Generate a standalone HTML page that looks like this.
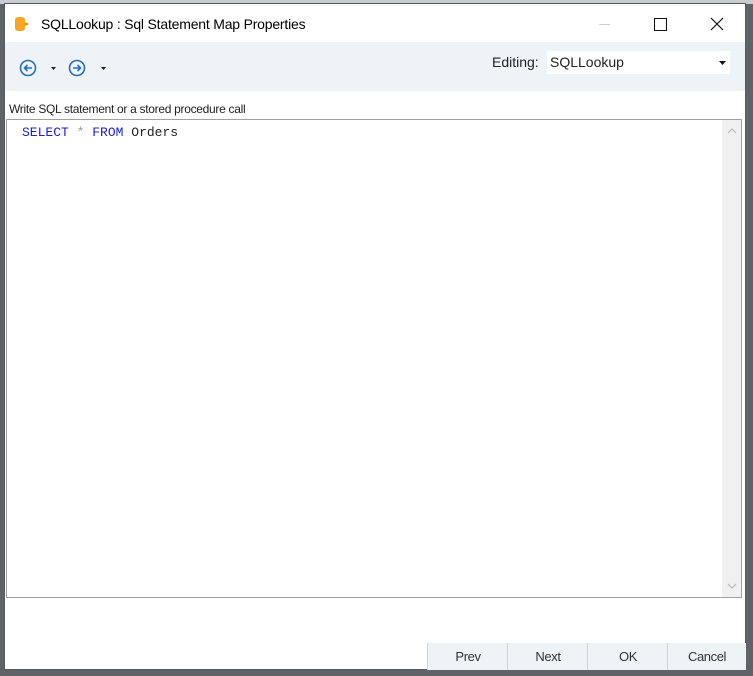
<!DOCTYPE html>
<html><head><meta charset="utf-8"><style>
html,body{margin:0;padding:0;width:753px;height:676px;overflow:hidden;background:#5f6368;position:relative;font-family:"Liberation Sans",sans-serif}
.top{position:absolute;left:0;top:0;width:753px;height:4px;background:#c8ccd0}
.win{position:absolute;left:4px;top:3px;width:742px;height:667px;background:#fff;border:1px solid #555b61;box-sizing:border-box}
.title{position:absolute;left:0;top:0;width:100%;height:39px;background:#fff}
.title .t{position:absolute;left:36px;top:12px;font-size:14px;color:#000;letter-spacing:-0.2px}
.tb{position:absolute;left:0;top:38px;width:100%;height:49px;background:#eef3f8}
.lbl{position:absolute;left:4px;top:98px;font-size:12px;color:#222;letter-spacing:-0.3px}
.ed{position:absolute;left:1px;top:115px;width:736px;height:479px;border:1px solid #a0a0a0;box-sizing:border-box;background:#fff}
.sb{position:absolute;right:0;top:0;width:19px;height:100%;background:#f0f0f0}
.code{position:absolute;left:15px;top:5px;font-family:"Liberation Mono",monospace;font-size:13px;color:#222}
.kw{color:#2020d0}
.btn{position:absolute;top:639px;height:27px;background:#eef3f8;border-left:1px solid #d0d4d8;font-size:13px;color:#333;text-align:center;line-height:28px;letter-spacing:-0.4px}
.edit{position:absolute;height:23px;background:#fff}
</style></head><body>
<div class="top"></div>
<div class="win">
 <div class="title">
  <svg style="position:absolute;left:9px;top:12px" width="18" height="18"><rect x="1" y="1" width="10" height="14" rx="3" fill="#f5a623"/><path d="M11 6 L15 8 L11 10Z" fill="#f08a00"/></svg>
  <div class="t">SQLLookup : Sql Statement Map Properties</div>
  <div style="position:absolute;left:594px;top:20px;width:11px;height:1px;background:#ccc"></div>
  <div style="position:absolute;left:649px;top:14px;width:11px;height:11px;border:1px solid #111"></div>
  <svg style="position:absolute;left:705px;top:13px" width="14" height="14"><path d="M1 1L13 13M13 1L1 13" stroke="#111" stroke-width="1.2"/></svg>
 </div>
 <div class="tb">
  <svg style="position:absolute;left:14px;top:17px" width="100" height="18">
   <circle cx="9" cy="9" r="7.5" fill="none" stroke="#2a6cb8" stroke-width="1.6"/>
   <path d="M13 9H5.5M8.5 6L5.5 9L8.5 12" fill="none" stroke="#2a6cb8" stroke-width="1.6"/>
   <path d="M32 8h5l-2.5 3z" fill="#222"/>
   <circle cx="58" cy="9" r="7.5" fill="none" stroke="#2a6cb8" stroke-width="1.6"/>
   <path d="M54 9H61.5M58.5 6L61.5 9L58.5 12" fill="none" stroke="#2a6cb8" stroke-width="1.6"/>
   <path d="M82 8h5l-2.5 3z" fill="#222"/>
  </svg>
  <div style="position:absolute;left:487px;top:12px;font-size:14px;color:#222">Editing:</div>
  <div class="edit" style="top:9px;left:542px;width:183px"><span style="position:absolute;left:3px;top:3px;font-size:14px;color:#222">SQLLookup</span>
  <svg style="position:absolute;left:172px;top:10px" width="8" height="5"><path d="M0 0h7l-3.5 4z" fill="#111"/></svg></div>
 </div>
 <div class="lbl">Write SQL statement or a stored procedure call</div>
 <div class="ed">
  <div class="code"><span class="kw">SELECT</span> <span style="color:#999">*</span> <span class="kw">FROM</span> Orders</div>
  <div class="sb">
   <svg style="position:absolute;left:5px;top:8px" width="10" height="6"><path d="M1 5L5 1L9 5" fill="none" stroke="#bbb" stroke-width="1.2"/></svg>
   <svg style="position:absolute;left:5px;bottom:8px" width="10" height="6"><path d="M1 1L5 5L9 1" fill="none" stroke="#bbb" stroke-width="1.2"/></svg>
  </div>
 </div>
 <div class="btn" style="left:422px;width:80px">Prev</div>
 <div class="btn" style="left:502px;width:80px">Next</div>
 <div class="btn" style="left:582px;width:80px">OK</div>
 <div class="btn" style="left:662px;width:78px">Cancel</div>
</div>
</body></html>
